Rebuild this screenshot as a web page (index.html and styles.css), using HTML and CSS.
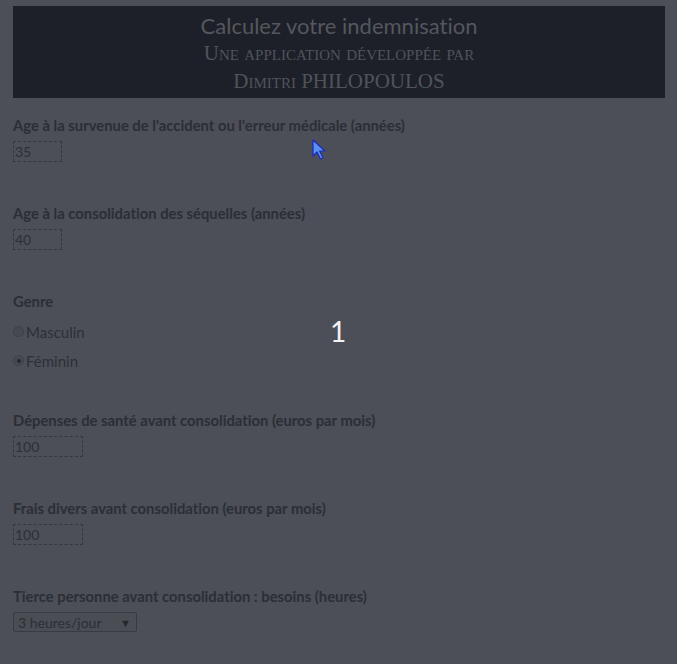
FILE: index.html
```html
<!DOCTYPE html>
<html lang="fr">
<head>
<meta charset="utf-8">
<title>Calculez votre indemnisation</title>
<link rel="stylesheet" href="styles.css">
</head>
<body>
<div class="page">
  <header class="banner">
    <div class="title">Calculez votre indemnisation</div>
    <div class="subtitle">Une application développée par</div>
    <div class="author">Dimitri <span class="caps">PHILOPOULOS</span></div>
  </header>

  <div class="group">
    <label class="label">Age à la survenue de l'accident ou l'erreur médicale (années)</label>
    <div class="field small">35</div>
  </div>

  <div class="group">
    <label class="label">Age à la consolidation des séquelles (années)</label>
    <div class="field small">40</div>
  </div>

  <div class="group radios">
    <label class="label">Genre</label>
    <div class="radio-row first"><span class="radio"></span><span class="radio-text">Masculin</span></div>
    <div class="radio-row"><span class="radio checked"></span><span class="radio-text">Féminin</span></div>
  </div>

  <div class="group">
    <label class="label">Dépenses de santé avant consolidation (euros par mois)</label>
    <div class="field medium">100</div>
  </div>

  <div class="group">
    <label class="label">Frais divers avant consolidation (euros par mois)</label>
    <div class="field medium">100</div>
  </div>

  <div class="group">
    <label class="label">Tierce personne avant consolidation : besoins (heures)</label>
    <div class="select"><span>3 heures/jour</span><span class="arrow">▼</span></div>
  </div>
</div>

<div class="progress">1</div>
<svg class="cursor" width="16" height="22" viewBox="0 0 16 22">
  <path d="M1 1 L1 17 L5 13 L8.5 20 L11 18.8 L7.6 12 L13 12 Z" fill="#5b8ff0" stroke="#1c2cc0" stroke-width="1.2" stroke-linejoin="round"/>
</svg>
</body>
</html>
```
FILE: styles.css
```css
html, body {
  margin: 0;
  padding: 0;
  background: #4c4f57;
}
body {
  font-family: Lato, "Open Sans", sans-serif;
  font-variant-ligatures: none;
  color: #2b2e35;
  position: relative;
  min-height: 664px;
  overflow: hidden;
}
.page {
  padding: 6px 12px 0 13px;
  display: flex;
  flex-direction: column;
}
.banner {
  background: #1d2028;
  height: 92px;
  text-align: center;
  padding-top: 7px;
  box-sizing: border-box;
  margin-bottom: 17px;
}
.title {
  font-size: 22px;
  line-height: 26px;
  color: #54575e;
}
.subtitle, .author {
  font-family: "Liberation Serif", "DejaVu Serif", serif;
  font-variant: small-caps;
  font-size: 21px;
  line-height: 28px;
  color: #50535a;
}
.group {
  display: flex;
  flex-direction: column;
  align-items: flex-start;
  margin-bottom: 41px;
}
.label {
  font-weight: 700;
  font-size: 14.8px;
  line-height: 20px;
  margin-bottom: 6px;
}
.field {
  height: 21px;
  box-sizing: border-box;
  border: 1px dashed #36383f;
  font-size: 14px;
  line-height: 19px;
  padding-left: 1px;
  color: #2c2f36;
}
.field.small { width: 49px; }
.field.medium { width: 70px; }
.radios { margin-bottom: 35px; }
.radios .label { margin-bottom: 0; }
.radio-row {
  display: flex;
  align-items: center;
  height: 29px;
}
.radio-row.first { margin-top: 6px; }
.radio {
  width: 11px;
  height: 11px;
  box-sizing: border-box;
  border-radius: 50%;
  border: 1px dotted #3a3c43;
  background: #46494f;
  margin-right: 2px;
  position: relative;
}
.radio.checked::after {
  content: "";
  position: absolute;
  left: 2.5px;
  top: 2.5px;
  width: 4px;
  height: 4px;
  border-radius: 50%;
  background: #26282e;
}
.radio-text {
  font-size: 15px;
  color: #2d3037;
}
.select {
  width: 124px;
  height: 20px;
  box-sizing: border-box;
  border: 1px solid #393b42;
  border-radius: 2px;
  background: #4a4d54;
  display: flex;
  justify-content: space-between;
  align-items: center;
  padding: 0 5px 0 4px;
  font-size: 14px;
  color: #2c2f36;
}
.select .arrow {
  font-size: 11px;
  color: #25272c;
}
.progress {
  position: absolute;
  left: 330px;
  top: 313px;
  font-size: 28px;
  line-height: 36px;
  color: #f2f2f2;
}
.cursor {
  position: absolute;
  left: 312px;
  top: 139px;
}
```
